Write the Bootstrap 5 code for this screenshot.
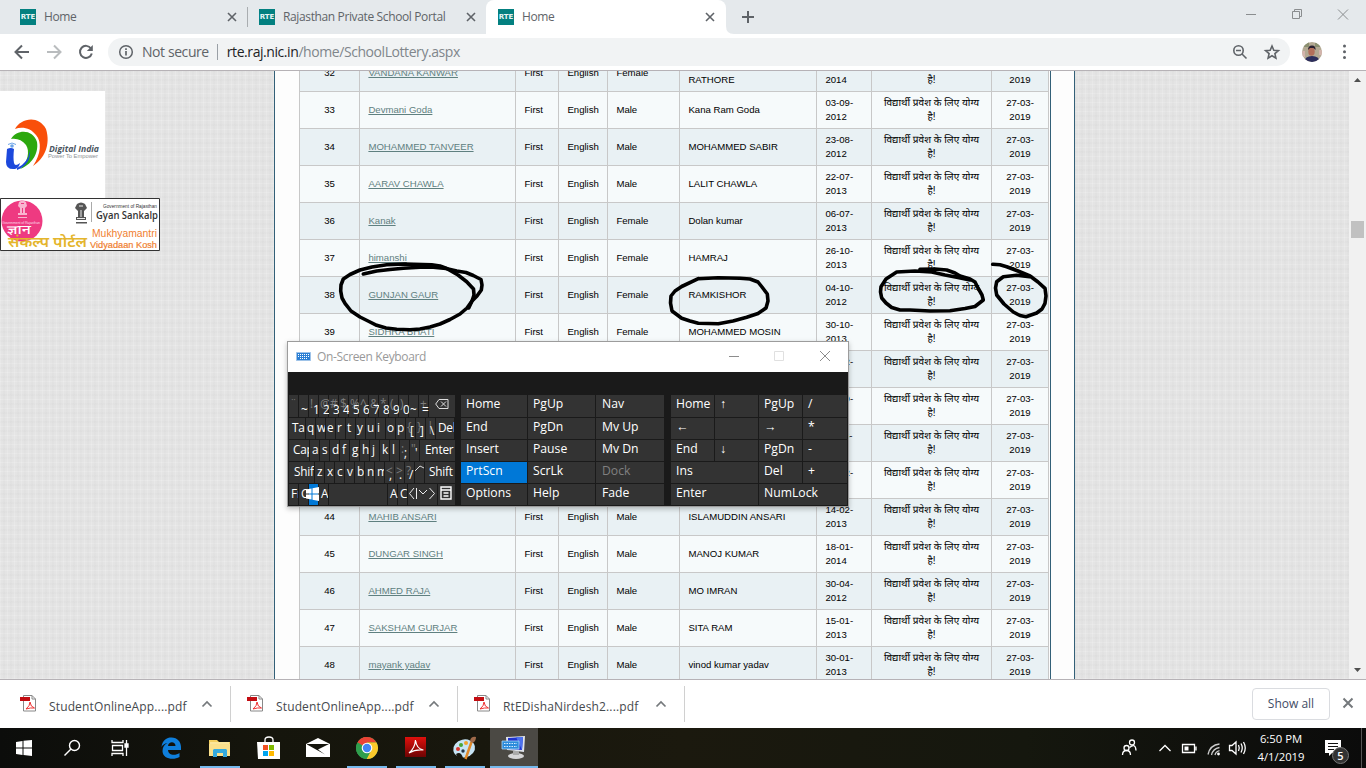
<!DOCTYPE html>
<html lang="en">
<head>
<meta charset="utf-8">
<title>Home</title>
<link href="https://cdn.jsdelivr.net/npm/bootstrap@5.3.0/dist/css/bootstrap.min.css" rel="stylesheet">
<style>
html,body{height:768px;overflow:hidden}
body{font-family:"Open Sans","Noto Sans",sans-serif;font-size:12px;line-height:16px;color:#5f6368;background:#fff;width:1366px}
svg{display:block;flex:none}
.strip{height:34px;background:#e5e9ec;padding-left:8px}
.tab{width:239px;height:34px;padding:0 10px 0 12px;color:#606468}
.tab.on{width:240px;background:#fff;border-radius:8px 8px 0 0;padding-right:11px}
.tab.sep{position:relative}
.tab.sep::after{content:"";position:absolute;right:-1px;top:7px;height:20px;width:1px;background:#a9adb0}
.fav{width:16px;height:16px;background:#038080;color:#e6f4f4;font:700 7px/16px "DejaVu Sans",sans-serif;text-align:center;overflow:hidden;margin-right:8px}
.ttl{letter-spacing:-.37px}
.bar2{height:36px;background:#fff}
.pill{width:1182px;height:28px;border-radius:14px;background:#f1f3f4;font-size:14px;line-height:28px}
.addr-sec{letter-spacing:-.42px}
.addr-url{letter-spacing:-.43px}
.addr-bar{width:1px;height:16px;background:#9aa0a6;margin:0 9px 0 8px}
.view{height:610px;border-top:1px solid #b6b2b6;border-bottom:1px solid #b6b2b6;overflow:hidden}
.linen{background-color:#e4e4e4;background-image:repeating-linear-gradient(90deg,rgba(255,255,255,.16) 0 1px,transparent 1px 3px,rgba(0,0,0,.01) 3px 5px,transparent 5px 7px),repeating-linear-gradient(0deg,rgba(255,255,255,.16) 0 1px,transparent 1px 4px,rgba(0,0,0,.01) 4px 6px,transparent 6px 9px)}
.side{width:274px}
.sheet{width:801px;background:#fdfdfd;border-left:1px solid #336078;border-right:1px solid #336078}
.sheet-in{width:776px;border-right:1px solid #336078;padding-left:24px}
.lot{table-layout:fixed;width:750px;border-collapse:separate;border-spacing:0;border-left:1px solid #c8c8c8;margin-top:-16px;font:9.6px/14px "Liberation Sans",Arial,sans-serif;color:#000}
.lot td{height:37px;padding:0 8px 0 8.4px;border-right:1px solid #c8c8c8;border-bottom:1px solid #c8c8c8;background:#e9f1f4;vertical-align:middle;overflow:hidden;white-space:nowrap}
.lot tr:nth-child(even) td{background:#f6fafb}
.lot td.c{text-align:center;padding:0 8px}
.lot a{color:#5f8080;text-decoration:underline}
.lot .hi{font-family:"Liberation Sans","Noto Sans Devanagari","Noto Sans",sans-serif;font-size:10.05px}
.scroll{width:17px;background:#f1f1f1}
.thumb{width:13px;height:17px;background:#c1c1c1;margin-top:133px}
.shelf{height:48px;background:#fff;color:#45494d}
.dl{width:227px;height:36px;padding-left:20px;border-right:1px solid #d0d0d0}
.dl.first{width:231px}
.fn{width:138px;letter-spacing:.14px;padding-top:5px}
.showall{width:78px;height:32px;border:1px solid #dadce0;border-radius:4px;font-size:12px;line-height:30px;color:#3f4d66;padding:0;background:#fff}
.task{height:40px;background:linear-gradient(90deg,#0c0d0b,#15150c 20%,#1b190e 50%,#15170e 75%,#0b0b0b);color:#fff}
.ti{width:48px;height:40px;margin-right:1px;position:relative}
.ti.z{margin-right:0}
.ti.run::after{content:"";position:absolute;left:4px;right:4px;bottom:0;height:2px;background:#76b9ed}
.ti.act{background:#4b4944}.ti.act::after{left:0;right:0}
.ink{position:absolute;left:0;top:0;pointer-events:none}
.osk{position:absolute;left:287px;top:341px;width:562px;height:166px;border:1px solid #9c9c9c;background:#1a1a1a;color:#fff;box-shadow:0 2px 5px rgba(0,0,0,.25)}
.osk-t{height:30px;background:#fff;color:#999;padding-left:8px}
.osk-name{letter-spacing:-.35px}
.keys{padding:23px 0 0 1px}
.krow{display:flex;gap:1px;margin-bottom:1px;height:21px}
.krow.r0{height:22px}
.k{background:#333;position:relative;white-space:nowrap;line-height:18px;overflow:hidden;flex:none;font-size:12.2px}
#kb0 .k{font-size:11.8px;letter-spacing:-.2px}
#kb0 .k.blue{z-index:1}
.k.blue{background:#0078d7}.k.dim{color:#808080}
.k.v{overflow:visible}
.k s{position:absolute;text-decoration:none;color:#7d7d7d;left:1px;top:-1px}
.k i{position:absolute;font-style:normal}
</style>
</head>
<body class="d-flex flex-column position-relative">
<div class="strip d-flex">
  <div class="tab sep d-flex align-items-center"><span class="fav">RTE</span><span class="ttl flex-grow-1">Home</span><svg width="10" height="10" viewBox="0 0 10 10"><path d="M1 1l8 8M9 1l-8 8" stroke="#5f6368" stroke-width="1.6"/></svg></div>
  <div class="tab d-flex align-items-center"><span class="fav">RTE</span><span class="ttl flex-grow-1">Rajasthan Private School Portal</span><svg width="10" height="10" viewBox="0 0 10 10"><path d="M1 1l8 8M9 1l-8 8" stroke="#5f6368" stroke-width="1.6"/></svg></div>
  <div class="tab on d-flex align-items-center"><span class="fav">RTE</span><span class="ttl flex-grow-1">Home</span><svg width="10" height="10" viewBox="0 0 10 10"><path d="M1 1l8 8M9 1l-8 8" stroke="#5f6368" stroke-width="1.6"/></svg></div>
  <svg width="44" height="34" viewBox="0 0 44 34"><path d="M0 34V26q0 8 8 8z" fill="#fff"/><path d="M22 11v12M16 17h12" stroke="#5f6368" stroke-width="2"/></svg>
  <svg class="ms-auto" width="136" height="34" viewBox="1230 0 136 34" fill="none" stroke="#8a8d8f"><path d="M1246 14.5h10M1292.500 11.500h7v7h-7zM1294.500 11v-1.500h7v7h-2M1338 9.500l10 10M1348 9.500l-10 10"/></svg>
</div>
<div class="bar2 d-flex align-items-center">
  <svg width="108" height="36" viewBox="0 34 108 36" fill="none" stroke-width="2"><path d="M29 52H16M22 45.500L15.500 52l6.500 6.500" stroke="#5f6368"/><path d="M47 52h13M54 45.500l6.500 6.500-6.500 6.500" stroke="#b9bcbe"/><path d="M91 48.500a6 6 0 1 0 .8 5" stroke="#5f6368"/><path d="M92.800 45v6h-6z" fill="#5f6368"/></svg>
  <div class="pill d-flex align-items-center">
    <svg class="ms-2" width="26" height="28" viewBox="0 0 26 28"><circle cx="10" cy="14" r="6.300" fill="none" stroke="#5f6368" stroke-width="1.500"/><path d="M10 13v4.500M10 10.200v1.700" stroke="#5f6368" stroke-width="1.700"/></svg>
    <span class="addr-sec">Not secure</span><span class="addr-bar"></span>
    <span class="addr-url flex-grow-1" style="color:#80868b"><span style="color:#202124">rte.raj.nic.in</span>/home/SchoolLottery.aspx</span>
    <svg width="62" height="28" viewBox="1228 38 62 28" fill="none" stroke="#5f6368" stroke-width="1.600"><circle cx="1238.500" cy="50.500" r="4.700"/><path d="M1236 50.500h5M1242 54l4.500 4.500M1272 46l1.800 4.200 4.600.4-3.500 3 1 4.500-3.900-2.400-3.900 2.400 1-4.500-3.500-3 4.600-.4z"/></svg>
  </div>
  <svg width="76" height="36" viewBox="1290 34 76 36"><defs><clipPath id="av"><circle cx="1312" cy="52" r="10"/></clipPath></defs><g clip-path="url(#av)"><path fill="#b3a993" d="M1302 42h20v20h-20z"/><path d="M1302 42h7v5h-7zM1315 43h6v4h-6z" fill="#8a8f70"/><path d="M1304 62q1-6 8-6t8 6z" fill="#2c2e5c"/><path d="M1302 51h3v6h-3zM1319 50h3v5h-3z" fill="#d3b4ac"/><ellipse cx="1311.500" cy="51.500" rx="3.200" ry="4.300" fill="#b36f5a"/><path d="M1308 50q0-4.500 4-4.500t3.500 4.500l-2-2h-3.500z" fill="#2a2030"/></g><path d="M1344.500 46v12" stroke="#5f6368" stroke-width="3" stroke-linecap="round" stroke-dasharray="0 5.700"/></svg>
</div>
<div class="view d-flex linen">
  <div class="side">
    <svg style="margin-top:20px" width="105" height="107" viewBox="0 91 105 107"><path fill="#fff" d="M0 91h105v107H0z"/><path d="M15 129C20 119 38 114 46 129c5 16-2 30-13 37 8-12 9-24 3-31-5-7-14-9-21-6z" fill="#f94f0a"/><path d="M11 139c6-10 22-10 26 3 2 12-6 23-17 27 8-7 10-18 6-24-4-5-9-7-15-6z" fill="#2ca80f"/><path d="M7 149q4-2 7 0-1 9 0 14 1 4 6 0-1 5-5 6-9 1-9-7z" fill="#1c48dc"/><path d="M17 168q11-5 13-17 1 13-13 19z" fill="#1c48dc"/><circle cx="12" cy="146" r="1.800" fill="#6ea5e8"/><path d="M8 144.500q4-3 8 0" fill="none" stroke="#6ea5e8"/><text x="49" y="152" font-family="Open Sans,sans-serif" font-size="8.500" font-weight="700" font-style="italic" fill="#4a5560" textLength="50" lengthAdjust="spacingAndGlyphs">Digital India</text><text x="48" y="158" font-family="Liberation Sans" font-size="6" fill="#8d9093" textLength="50" lengthAdjust="spacingAndGlyphs">Power To Empower</text></svg>
    <svg width="160" height="53" viewBox="0 0 160 53"><path d="M.5.500h159v52H.5z" fill="#fff" stroke="#333"/><circle cx="22" cy="23" r="20.500" fill="#ee3a81"/><path d="M19 4q3.500-3 7 0l1 4-2 2v5h2v2H18v-2h2v-5l-2-2zM18 19h9v1h-9z" fill="#f9b5d0"/><path d="M22.500 10v5M21 5.500h3" stroke="#ee3a81"/><path d="M77 6q4-3 8 0l2 4-3 3v6h2v3H76v-3h2v-6l-3-3zM76 24h11v1.500H76z" fill="#555"/><path d="M81 12v7M79 8h4M77 20.500h8" stroke="#fff" stroke-width=".9"/><path d="M91.500 4v20" stroke="#aaa"/><text x="2" y="25.500" font-family="Liberation Sans" font-size="3.600" fill="#fbd3e3" textLength="38">Government of Rajasthan</text><text x="7" y="36" font-family="Noto Sans Devanagari,Noto Sans,sans-serif" font-size="12" font-weight="500" fill="#fff" textLength="24" lengthAdjust="spacingAndGlyphs">ज्ञान</text><text x="8" y="49" font-family="Noto Sans Devanagari,Noto Sans,sans-serif" font-size="14" font-weight="600" fill="#e4b52c" textLength="79" lengthAdjust="spacingAndGlyphs">संकल्प पोर्टल</text><text x="103" y="9.500" font-family="Liberation Sans" font-size="5" fill="#333" textLength="54" lengthAdjust="spacingAndGlyphs">Government of Rajasthan</text><text x="96" y="21" font-family="Open Sans,sans-serif" font-size="10.500" font-weight="600" fill="#333" textLength="62" lengthAdjust="spacingAndGlyphs">Gyan Sankalp</text><text x="92" y="39" font-family="Liberation Sans" font-size="10.500" fill="#f08030" textLength="65" lengthAdjust="spacingAndGlyphs">Mukhyamantri</text><text x="90" y="49.500" font-family="Liberation Sans" font-size="9" fill="#f08030" stroke="#f08030" stroke-width=".2" textLength="67" lengthAdjust="spacingAndGlyphs">Vidyadaan Kosh</text></svg>
  </div>
  <div class="sheet"><div class="sheet-in">
    <table class="lot"><colgroup><col style="width:60px"><col style="width:156px"><col style="width:43px"><col style="width:49px"><col style="width:72px"><col style="width:137px"><col style="width:55px"><col style="width:120px"><col style="width:57px"></colgroup><tbody id="rows"></tbody></table>
  </div></div>
  <div class="flex-grow-1"></div>
  <div class="scroll d-flex flex-column align-items-center">
    <svg width="17" height="17" viewBox="0 0 17 17"><path d="M5 11h7L8.500 7z" fill="#505050"/></svg><div class="thumb"></div>
    <svg class="mt-auto" width="17" height="17" viewBox="0 0 17 17"><path d="M5 6h7l-3.500 4z" fill="#505050"/></svg>
  </div>
</div>
<div class="shelf d-flex align-items-center">
  <div class="dl first d-flex align-items-center"><svg class="pdf" width="29" height="36" viewBox="0 0 29 36"></svg><span class="fn">StudentOnlineApp....pdf</span><svg width="40" height="36" viewBox="0 0 40 36"><path d="M15.500 20.500l4.500-4.500 4.500 4.500" fill="none" stroke="#75797c" stroke-width="1.700"/></svg></div>
  <div class="dl d-flex align-items-center" style="padding-left:16px"><svg class="pdf" width="29" height="36" viewBox="0 0 29 36"></svg><span class="fn">StudentOnlineApp....pdf</span><svg width="40" height="36" viewBox="0 0 40 36"><path d="M15.500 20.500l4.500-4.500 4.500 4.500" fill="none" stroke="#75797c" stroke-width="1.700"/></svg></div>
  <div class="dl d-flex align-items-center" style="padding-left:16px"><svg class="pdf" width="29" height="36" viewBox="0 0 29 36"></svg><span class="fn">RtEDishaNirdesh2....pdf</span><svg width="40" height="36" viewBox="0 0 40 36"><path d="M15.500 20.500l4.500-4.500 4.500 4.500" fill="none" stroke="#75797c" stroke-width="1.700"/></svg></div>
  <button class="btn showall ms-auto">Show all</button>
  <svg width="36" height="36" viewBox="0 0 36 36"><path d="M13.500 12.500l9 9M22.500 12.500l-9 9" stroke="#75797c" stroke-width="2"/></svg>
</div>
<div class="task d-flex">
  <div class="ti z"><svg width="48" height="40" viewBox="0 0 48 40"><path d="M16 14l6.500-1v6.500H16zM23.500 12.800L32 12v7.500h-8.500zM16 20.500h6.500V27L16 26zM23.500 20.500H32V28l-8.500-.9z" fill="#fff"/></svg></div>
  <div class="ti z"><svg width="48" height="40" viewBox="48 0 48 40" fill="none" stroke="#fff" stroke-width="1.400"><circle cx="74.500" cy="17.500" r="5"/><path d="M71 21l-6.500 6.500"/></svg></div>
  <div class="ti me-1"><svg width="48" height="40" viewBox="96 0 48 40" fill="none" stroke="#fff" stroke-width="1.300"><path d="M112 12v2.500h11V12M112.500 17.500h10v5h-10zM112 28v-2.500h11V28M126.500 12v16"/><path d="M125 16h3v3h-3z" fill="#fff"/></svg></div>
  <div class="ti" style="margin-left:-1px"><svg width="48" height="40" viewBox="147 0 48 40"><path d="M161.500 19c1-7 5-9.500 10-9.500 6 0 9.500 4.500 9.500 9.500v3h-13c.5 6 8 5.500 11.500 3v4c-6 3.500-17 2-17-6 0-4 2-6.500 5-8-3 .5-5 2-6 4zM168 18h7.500c0-5-7-5-7.500 0z" fill="#0f7fdc" fill-rule="evenodd"/></svg></div>
  <div class="ti run"><svg width="48" height="40" viewBox="196 0 48 40"><path d="M209 12h8l2 2h11v14h-21z" fill="#f3ce5e"/><path d="M210 14h19v6h-19z" fill="#fbe59a"/><path d="M209 16h21v12h-21z" fill="#fbe08b"/><path d="M213 22l1-1h12l1 1v7h-4v-4h-6v4h-4z" fill="#35aade"/></svg></div>
  <div class="ti"><svg width="48" height="40" viewBox="245 0 48 40"><path d="M265 14v-2q0-3 4-3t4 3v2" fill="none" stroke="#fff" stroke-width="1.300"/><path d="M257 14h23v17h-22z" fill="#fff"/><path d="M263 17h5v5h-5z" fill="#f25022"/><path d="M269 17h5v5h-5z" fill="#7fba00"/><path d="M263 23h5v5h-5z" fill="#00a4ef"/><path d="M269 23h5v5h-5z" fill="#ffb900"/></svg></div>
  <div class="ti"><svg width="48" height="40" viewBox="294 0 48 40"><path d="M306 16l12-6 12 6v13h-24z" fill="#fff"/><path d="M307 16h22l-11 5.500 7 5-18-10z" fill="#15150d"/></svg></div>
  <div class="ti run"><svg width="48" height="40" viewBox="343 0 48 40"><circle cx="367" cy="20" r="11" fill="#34a853"/><path d="M357.500 14.500A11 11 0 0 1 376.500 14.500H367z" fill="#ea4335"/><path d="M357.500 14.500a11 11 0 0 1 9.500-5.500l0 11z" fill="#ea4335"/><path d="M376.500 14.500A11 11 0 0 1 366.500 31l5.500-10-5-6.500z" fill="#fbc92b"/><path d="M357.500 14.500A11 11 0 0 0 366.500 31l4-8z" fill="#2f9e4d"/><circle cx="367" cy="20" r="5.300" fill="#fff"/><circle cx="367" cy="20" r="4.200" fill="#4285f4"/></svg></div>
  <div class="ti run"><svg width="48" height="40" viewBox="392 0 48 40"><defs><linearGradient id="rd" x2="0" y2="1"><stop stop-color="#e0100c"/><stop offset="1" stop-color="#6d0403"/></linearGradient></defs><path d="M405 9h21v20h-21z" fill="url(#rd)"/><path d="M409 25q6-5 6.500-13 1 9 8 10-8-1-14.500 3z" fill="none" stroke="#fff" stroke-width="1.200"/></svg></div>
  <div class="ti run"><svg width="48" height="40" viewBox="441 0 48 40"><ellipse cx="464" cy="20.500" rx="11" ry="9" fill="#c6e3f4" transform="rotate(-12 464 20)"/><path d="M456 26q5-3 7 4h-5z" fill="#18170d"/><circle cx="458" cy="21" r="2" fill="#d9352c"/><circle cx="461" cy="17" r="2" fill="#49a535"/><circle cx="466" cy="15" r="2" fill="#f0a22d"/><circle cx="463" cy="23" r="1.700" fill="#234"/><path d="M465.500 31l6-17" stroke="#e08a2c" stroke-width="2.500"/><path d="M470 13q1-5 6-4 0 5-4 6z" fill="#a06a4a"/></svg></div>
  <div class="ti run act"><svg width="48" height="40" viewBox="490 0 48 40"><path d="M506 9l19-1-1 16-17-2z" fill="#dfe3ea"/><path d="M508 10l15-1-1 13-14-1z" fill="#1e32cf"/><path d="M516 9l7 0-1 13z" fill="#4d72ee"/><path d="M502 13h17v8h-17z" fill="#2d8cdb" stroke="#a7d5f7" stroke-width=".8"/><path d="M504 15.500h13M504 18.500h13" stroke="#d7ecfc" stroke-dasharray="1.500 1"/><ellipse cx="516" cy="28" rx="8" ry="3" fill="#d6d6d8"/><path d="M513 23h6v4h-6z" fill="#aaa"/></svg></div>
  <svg class="ms-auto" width="142" height="40" viewBox="1110 0 142 40" fill="none" stroke="#fff" stroke-width="1.300"><circle cx="1126.500" cy="20" r="2.500"/><path d="M1122.500 27q0-4.500 4-4.500t4 4.500"/><circle cx="1132" cy="14.500" r="2.500"/><path d="M1129.500 19.500q6-5 6.500 3"/><path d="M1159.500 23l5.500-5.500 5.500 5.500M1182.500 16.500h12v8h-12zM1196 18.500v4"/><path d="M1184.500 18.500h4v4h-4z" fill="#fff" stroke="none"/><path d="M1208 26.500q2-9.500 11.500-10.500M1211.500 27q1.500-6.500 8-7.500M1215 27q.8-3.500 4.500-4.300" stroke="#ccc"/><circle cx="1218.500" cy="26" r="1.400" fill="#fff" stroke="none"/><path d="M1229.500 17.500h2.500l4-3.500v12l-4-3.500h-2.500zM1238.500 17q1.500 3 0 6M1241 15.500q2.500 4.500 0 9M1243.500 14q3.500 6 0 12"/></svg>
  <div class="text-center" style="width:58px;font-size:11.300px;line-height:18px;padding-top:2px">6:50 PM<br>4/1/2019</div>
  <svg width="56" height="40" viewBox="1310 0 56 40"><path d="M1325 12h16v13h-9l-3 3v-3h-4z" fill="#fff"/><path d="M1328 15.500h10M1328 18.500h10M1328 21.500h6" stroke="#111"/><circle cx="1340.500" cy="27.500" r="8" fill="#333" stroke="#777"/><text x="1340.500" y="31.500" text-anchor="middle" fill="#fff" font-size="11" font-weight="600">5</text><path d="M1361.500 0v40" stroke="#555"/></svg>
</div>

<svg class="ink" width="1366" height="768" viewBox="0 0 1366 768" fill="none" stroke="#000" stroke-width="3.600" stroke-linecap="round" stroke-linejoin="round"><g id="ink"></g></svg>

<div class="osk">
  <div class="osk-t d-flex align-items-center">
    <svg width="21" height="14" viewBox="0 0 21 14"><path d="M.5 2.500h14v8H.5z" fill="#2b7fd4" stroke="#9fc3e8"/><path d="M2 4.500h11M2 6.500h11M4 8.500h7" stroke="#fff" stroke-dasharray="1 1"/></svg>
    <span class="osk-name flex-grow-1">On-Screen Keyboard</span>
    <svg width="130" height="30" viewBox="718 342 130 30" fill="none" stroke="#8c8c8c"><path d="M729 356.500h10M820 351l10 10M830 351l-10 10"/><path d="M774.500 351.500h9v9h-9z" stroke="#e0e0e0"/></svg>
  </div>
  <div class="keys d-flex"><div id="kb0" style="width:172px"></div><div id="kb1" style="width:210px"></div><div id="kb2" style="width:177px"></div></div>
</div>

<script src="https://cdn.jsdelivr.net/npm/bootstrap@5.3.0/dist/js/bootstrap.bundle.min.js"></script>
<script>
const students = [
 ["VANDANA KANWAR","Female","SURENDRA<br>RATHORE","12-05-","2014"],
 ["Devmani Goda","Male","Kana Ram Goda","03-09-","2012"],
 ["MOHAMMED TANVEER","Male","MOHAMMED SABIR","23-08-","2012"],
 ["AARAV CHAWLA","Male","LALIT CHAWLA","22-07-","2013"],
 ["Kanak","Female","Dolan kumar","06-07-","2013"],
 ["himanshi","Female","HAMRAJ","26-10-","2013"],
 ["GUNJAN GAUR","Female","RAMKISHOR","04-10-","2012"],
 ["SIDHRA BHATI","Female","MOHAMMED MOSIN","30-10-","2013"],
 ["","","","20-12-",""],["","","","15-09-",""],["","","","11-08-",""],["","","","18-12-",""],
 ["MAHIB ANSARI","Male","ISLAMUDDIN ANSARI","14-02-","2013"],
 ["DUNGAR SINGH","Male","MANOJ KUMAR","18-01-","2014"],
 ["AHMED RAJA","Male","MO IMRAN","30-04-","2012"],
 ["SAKSHAM GURJAR","Male","SITA RAM","15-01-","2013"],
 ["mayank yadav","Male","vinod kumar yadav","30-01-","2013"]];
document.getElementById("rows").innerHTML = students.map((s,i)=>
 `<tr><td class="c">${i+32}</td><td><a href="#">${s[0]}</a></td><td>First</td><td>English</td><td>${s[1]}</td><td>${s[2]}</td><td>${s[3]}<br>${s[4]||"&nbsp;"}</td><td class="c hi">विद्यार्थी प्रवेश के लिए योग्य<br>है!</td><td class="c">27-03-<br>2019</td></tr>`).join("");

document.querySelectorAll(".pdf").forEach(e=>e.innerHTML='<path d="M3.500 9.500h8.500l3.500 3.500v12H3.500z" fill="#fff" stroke="#888"/><path d="M12 9.500V13h3.500" fill="none" stroke="#888"/><path d="M0 11h10v4H0z" fill="#c30d12"/><path d="M6 23q4-3 4-7 .5 5 4.500 6-4-.5-8.500 1z" fill="none" stroke="#e33"/>');

const strokes = [
 "363.300,274 376.700,271 390,269.500 403.300,268.300 420,267.300 433.300,267.300 446,268.500 456.700,271 466,272.500 473.300,275.500 481,279.500 482,285 481.300,290 477,296 472,301 468.700,308",
 "446.700,268.500 440,266 431.700,264.700 405,264 386.700,264.700 372,267 360,270 350,274.500 343.300,279 341,285 340.700,291 342,298 345,303.300 351,311 360,317 368,321 376.700,325.300 386,328 396.700,329.300 410,329.800 420,329 430,327 440,324 450,319.500 460,314 467,308 472,301 474,295 473.500,289 466.700,281.700 458,275 446.700,268.500",
 "698.300,278.700 718,277.800 740,278.300 750,279 758,282 762,287 767.300,294 768,301 766,308 758,313.500 746.700,317.300 733,321 718.300,323.700 698.300,323.300 690,321 681.700,318.300 672,311 670.500,303 671,296 675,291 681.700,286.500 698.300,278.700",
 "920,269.300 935,269 946.700,270 955,273 960,276 970,279 975,282 978,288 982,295 983.300,300 975,306.500 965,308.500 950,310.700 930,311 910,310 900,310 891.700,307.500 886,303 881.700,298 880.500,292 881,286.700 886,279 896.700,272 915,271 931.700,272 945,275 956.700,277.300 970,280",
 "992.700,264.300 1000,264.800 1006.700,266.700 1018,271 1030,276 1038,282 1045,288.300 1046,296 1045,303.300 1042,309 1036.700,313 1026,316.700 1020,315.500 1013.300,312 1004,304 996.700,295 995.500,288 996.700,281.700 1003.300,276.700 1016.700,275.300 1031.700,277"];
document.getElementById("ink").innerHTML = strokes.map(p=>`<polyline points="${p}"/>`).join("");

/* key: [width, label, label inset, shift label, extra class] */
const ten = (a,n)=>a.map(c=>[9,c,n||1]);
const nums = [..."1234567890"].map((c,i)=>[9,c,4,"!@#$%^&*()"[i],"v n"]);
const main = [
 [[9,"",0,"¨"],[9,"~",2,"","n"],...nums,[9,"~",1,"","v n"],[9,"=",3,"+","v n"],[26,'<svg width="14" height="11" viewBox="0 0 14 11" style="margin-top:4px" fill="none" stroke="#ddd"><path d="M4 .5h9v9H4L.7 5zM6 2.500l5 5M11 2.500l-5 5"/></svg>',6]],
 [[16,"Tab",3],...ten([..."qwertyuiop"]),[9,"[",4,"{"],[9,"]",4,"}"],[9,"\\",4,"|"],[18,"Del",2]],
 [[20,"Caps",4],...ten([..."asdfghjkl"],2),[9,";",4,":"],[9,"'",5,'"'],[35,"Enter",5]],
 [[25,"Shift",5],...ten([..."zxcvbnm"],2),[9,",",4,"&lt;"],[9,".",4,"&gt;"],[9,"/",4,"?"],[9,'<svg width="9" height="10" viewBox="0 0 9 10" fill="none" stroke="#ddd"><path d="M0 9l5-5 4 2"/></svg>',0],[30,"Shift",4]],
 [[9,"Fn",2],[9,"Ctrl",2],[9,'<svg width="13" height="14" viewBox="0 0 13 14" style="margin:3px 0 0 -3px"><path d="M0 2.500L5.500 1.500V6.500H0zM6.500 1.300L13 0V6.500H6.500zM0 7.500h5.500v5L0 11.500zM6.500 7.500H13V14l-6.500-1.300z" fill="#fff"/></svg>',0,"","blue v"],[9,"A",2],[58,"",0],[9,"A",2,"","v"],[9,"C",2],[29,'<svg width="29" height="18" viewBox="0 0 29 18" fill="none" stroke="#eee"><path d="M6 4L1.500 9.500 6 15M8.500 4v11M11 6l4 4 4-4M21.500 4l5 5.500-5 5.500"/></svg>',0],[17,'<svg width="12" height="14" viewBox="0 0 12 14" style="margin-top:2px" fill="none" stroke="#fff"><path d="M1 1h10v12H1zM1 4h10M3.500 7h5M3.500 10h5" stroke-width="1.400"/></svg>',2]]];
const mid = [["Home","PgUp","Nav"],["End","PgDn","Mv Up"],["Insert","Pause","Mv Dn"],["PrtScn","ScrLk","Dock"],["Options","Help","Fade"]]
 .map(r=>r.map((t,i)=>[[66,67,68][i],t,i==2?6:5,"",t=="PrtScn"?"blue":t=="Dock"?"dim":""]));
const pad = [["Home","↑","PgUp","/"],["←","","→","*"],["End","↓","PgDn","-"],["Ins",null,"Del","+"],["Enter",null,"NumLock",null]]
 .map(r=>{const o=[];r.forEach((t,i)=>{t===null?o[o.length-1][0]+=i==1?44:45:o.push([[43,43,43,44][i],t,5])});return o});
const draw=(id,rows)=>document.getElementById(id).innerHTML=rows.map((r,y)=>`<div class="krow r${y}">`+r.map(k=>`<div class="k ${k[4]||""}" style="width:${k[0]}px">${k[3]?`<s>${k[3]}</s>`:""}<i style="left:${k[2]}px;top:${/(^| )n/.test(k[4]||"")?5:(k[3]&&id=="kb0"?3:0)}px">${k[1]}</i></div>`).join("")+"</div>").join("");
draw("kb0",main);draw("kb1",mid);draw("kb2",pad);
</script>
</body>
</html>
